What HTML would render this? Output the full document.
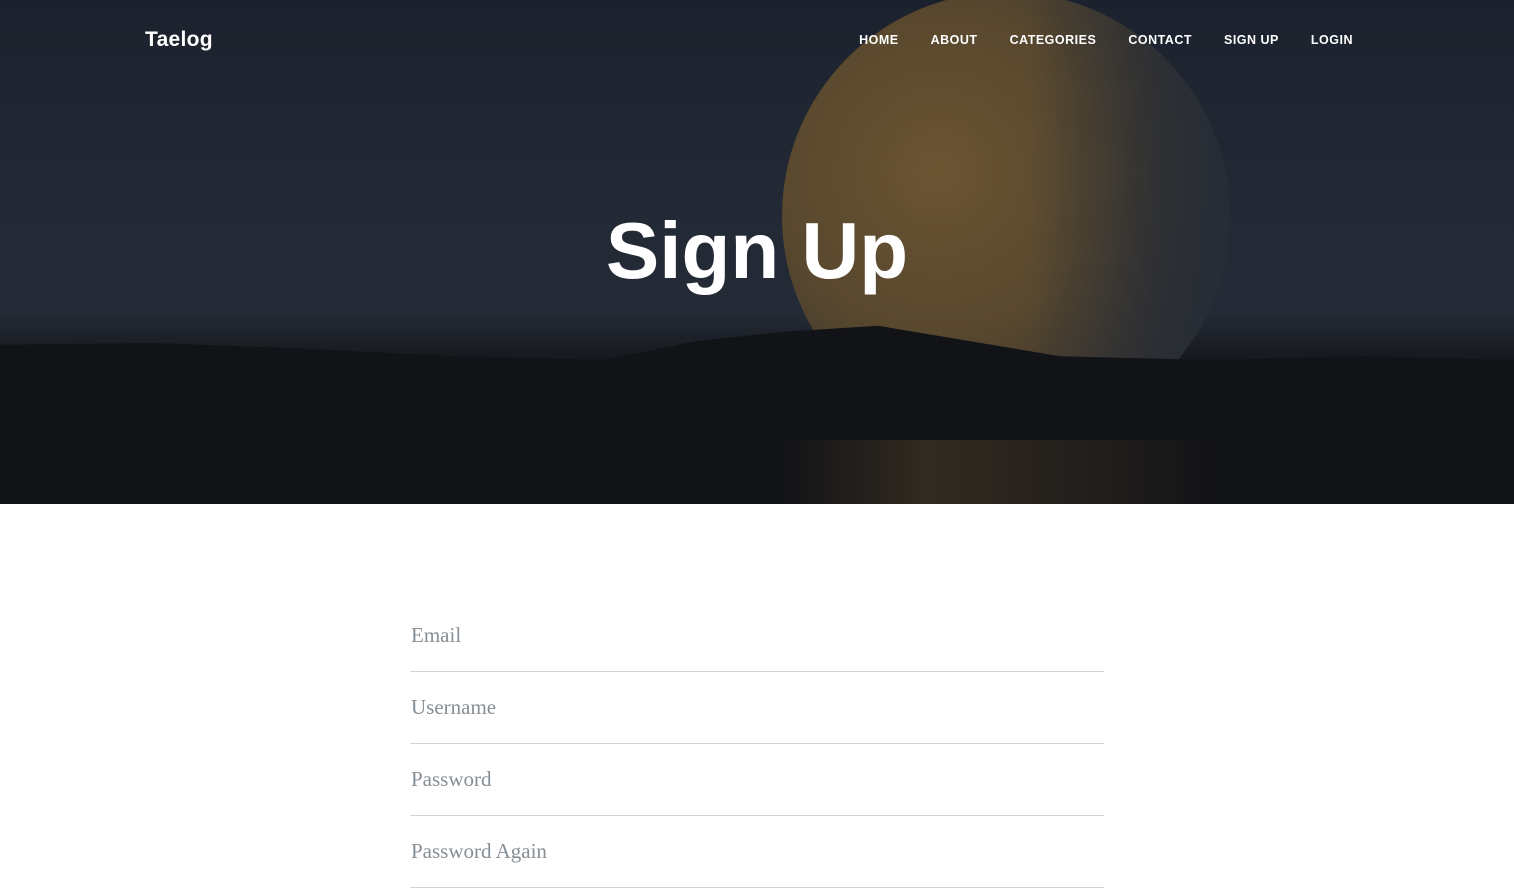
<!DOCTYPE html>
<html><head><meta charset="utf-8"><style>
*{margin:0;padding:0;box-sizing:border-box}
html,body{width:1514px;height:864px;overflow:hidden;background:#fff;font-family:"Liberation Sans",sans-serif}
.hero{position:relative;height:504px;overflow:hidden;background:linear-gradient(180deg,#1c222d 0%,#222935 40%,#242b36 62%,#15171c 72%,#101114 100%)}
.moon{position:absolute;left:782px;top:-8px;width:448px;height:448px;border-radius:50%;background:radial-gradient(circle at 35% 40%,#6e5732 0%,#5c4a2e 40%,#3e3830 70%,#2b2e36 100%);opacity:.95}
.moon2{position:absolute;left:782px;top:-8px;width:448px;height:448px;border-radius:50%;background:linear-gradient(90deg,rgba(0,0,0,0) 0%,rgba(0,0,0,0) 55%,rgba(35,42,54,.7) 85%,rgba(35,42,54,.85) 100%)}
.land{position:absolute;left:0;top:322px;width:1514px;height:190px;background:#121317;clip-path:polygon(0 12%,10% 11%,20% 14%,30% 18%,40% 20%,46% 10%,52% 5%,58% 2%,64% 10%,70% 18%,80% 20%,90% 18%,100% 20%,100% 100%,0 100%)}
.refl{position:absolute;left:780px;top:440px;width:440px;height:64px;background:linear-gradient(90deg,rgba(0,0,0,0),rgba(110,85,50,.35),rgba(90,70,45,.25),rgba(0,0,0,0))}
nav{position:absolute;top:0;left:0;width:100%;height:80px;color:#fff}
.brand{position:absolute;left:145px;top:28px;font-size:21px;font-weight:bold;letter-spacing:.3px}
.links{position:absolute;right:161px;top:33px;display:flex;gap:32px;font-size:12.5px;font-weight:bold;letter-spacing:.5px}
h1{position:absolute;top:205px;left:0;width:100%;text-align:center;color:#fff;font-size:80px;font-weight:bold}
form{position:absolute;left:410px;top:600px;width:694px}
.f{height:72px;border-bottom:1px solid #ced4da;font-family:"Liberation Serif",serif;font-size:21px;color:#868e96;padding-top:23px;padding-left:1px}
</style></head><body>
<div class="hero">
<div class="moon"></div><div class="moon2"></div>
<div class="land"></div><div class="refl"></div>
<nav><div class="brand">Taelog</div>
<div class="links"><span>HOME</span><span>ABOUT</span><span>CATEGORIES</span><span>CONTACT</span><span>SIGN UP</span><span>LOGIN</span></div></nav>
<h1>Sign Up</h1>
</div>
<form>
<div class="f">Email</div>
<div class="f">Username</div>
<div class="f">Password</div>
<div class="f">Password Again</div>
</form>
</body></html>
